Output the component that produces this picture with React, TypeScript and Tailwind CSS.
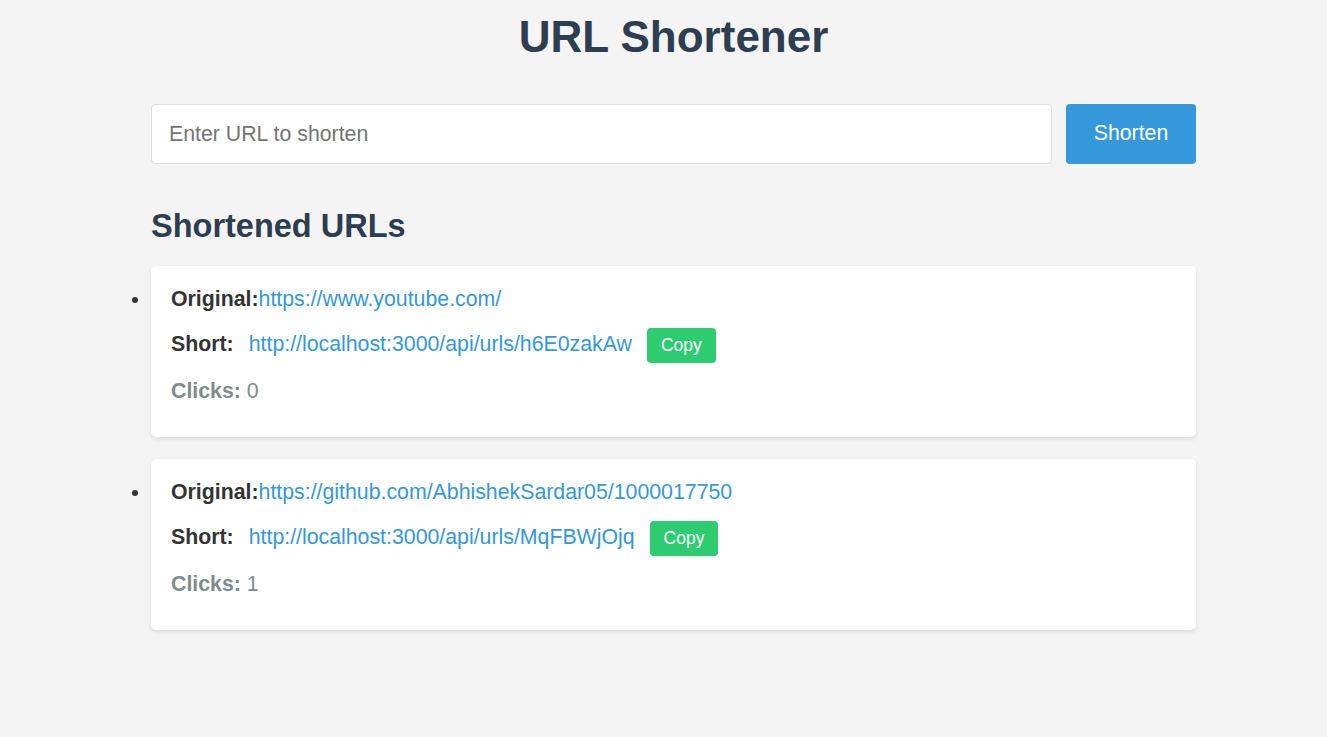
import React from "react";

const items = [
  {
    original: "https://www.youtube.com/",
    short: "http://localhost:3000/api/urls/h6E0zakAw",
    clicks: 0,
  },
  {
    original: "https://github.com/AbhishekSardar05/1000017750",
    short: "http://localhost:3000/api/urls/MqFBWjOjq",
    clicks: 1,
  },
];

export default function App() {
  return (
    <div
      className="min-h-[737px] w-full bg-[#f4f4f4]"
      style={{ fontFamily: '"Liberation Sans", Arial, sans-serif' }}
    >
      <div className="mx-auto w-[1065px] pl-[20px] pt-[12px]">
        <h1 className="text-center text-[44px] font-bold leading-[50px] text-[#2c3e50]">
          URL Shortener
        </h1>
        <div className="mt-[42px] flex gap-[14px]">
          <input
            type="text"
            placeholder="Enter URL to shorten"
            className="h-[60px] flex-1 rounded-[4px] border border-[#dddddd] bg-white pl-[17px] text-[21.3px] text-[#333] outline-none placeholder:text-[#757575]"
          />
          <button className="h-[60px] w-[130px] rounded-[4px] bg-[#3498db] text-[21.3px] text-white">
            Shorten
          </button>
        </div>
        <h2 className="mt-[42px] text-[32.5px] font-bold leading-[40px] text-[#2c3e50]">
          Shortened URLs
        </h2>
        <ul className="mt-[20px] flex list-disc flex-col gap-[22px]">
          {items.map((it) => (
            <li
              key={it.short}
              className="rounded-[5px] bg-white px-[20px] pb-[23px] pt-[10px] text-[21.3px] text-[#333] shadow-[0_2px_4px_rgba(0,0,0,0.1)]"
            >
              <div className="leading-[46px]">
                <strong className="font-bold">Original:</strong>
                <a className="text-[#3498db]">{it.original}</a>
              </div>
              <div className="flex h-[46px] items-center gap-[15px]">
                <strong className="font-bold">Short:</strong>
                <a className="text-[#3498db]">{it.short}</a>
                <button className="h-[35px] rounded-[4px] bg-[#2ecc71] px-[14px] text-[17.5px] text-white">
                  Copy
                </button>
              </div>
              <div className="leading-[46px] text-[#7f8c8d]">
                <strong className="font-bold">Clicks:</strong> {it.clicks}
              </div>
            </li>
          ))}
        </ul>
      </div>
    </div>
  );
}
